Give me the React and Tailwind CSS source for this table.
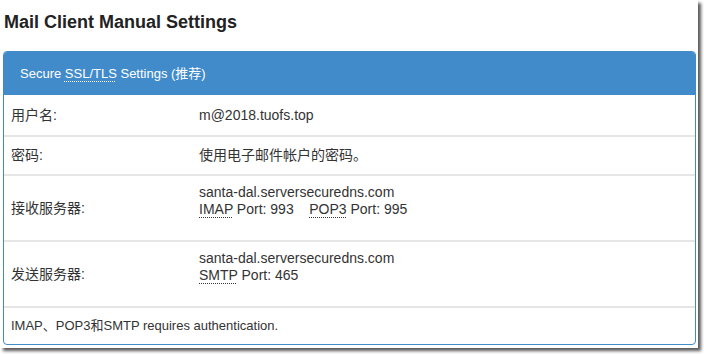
const abbr = "underline decoration-dotted decoration-1 underline-offset-[3px]";

const Row = ({ label, children, tall }) => (
  <div
    className={`grid grid-cols-[195px_1fr] border-t-2 border-[#e6e6e6] ${
      tall ? "h-[66px]" : "h-[39px]"
    }`}
  >
    <div className="self-center pl-[7px]">{label}</div>
    <div className={tall ? "pt-[8px] leading-[17px]" : "self-center"}>{children}</div>
  </div>
);

export default function App() {
  return (
    <div className="w-[704px] h-[354px] bg-white">
      <div
        className="w-[698px] h-[348px] bg-white shadow-[3px_3px_3px_rgba(0,0,0,0.65)] text-[#333] text-[14px]"
        style={{ fontFamily: '"Liberation Sans", Arial, "Noto Sans CJK SC", sans-serif' }}
      >
        <h1 className="pl-[4px] pt-[12px] h-[51px] text-[18px] font-bold text-[#222] leading-[20px]">
          Mail Client Manual Settings
        </h1>
        <div className="mx-[3px] w-[693px] rounded-[4px] border border-[#428bca] overflow-hidden">
          <div className="h-[43px] bg-[#428bca] text-white text-[13px] flex items-center pl-[16px]">
            Secure&nbsp;<span className={abbr}>SSL/TLS</span>&nbsp;Settings (推荐)
          </div>
          <div className="grid grid-cols-[195px_1fr] h-[40px]">
            <div className="self-center pl-[7px]">用户名:</div>
            <div className="self-center">m@2018.tuofs.top</div>
          </div>
          <Row label="密码:">使用电子邮件帐户的密码。</Row>
          <Row label="接收服务器:" tall>
            santa-dal.serversecuredns.com
            <br />
            <span className={abbr}>IMAP</span> Port: 993&nbsp;&nbsp;&nbsp;&nbsp;
            <span className={abbr}>POP3</span> Port: 995
          </Row>
          <Row label="发送服务器:" tall>
            santa-dal.serversecuredns.com
            <br />
            <span className={abbr}>SMTP</span> Port: 465
          </Row>
          <div className="border-t-2 border-[#e6e6e6] h-[38px] flex items-center pl-[7px] text-[13px]">
            IMAP、POP3和SMTP requires authentication.
          </div>
        </div>
      </div>
    </div>
  );
}
